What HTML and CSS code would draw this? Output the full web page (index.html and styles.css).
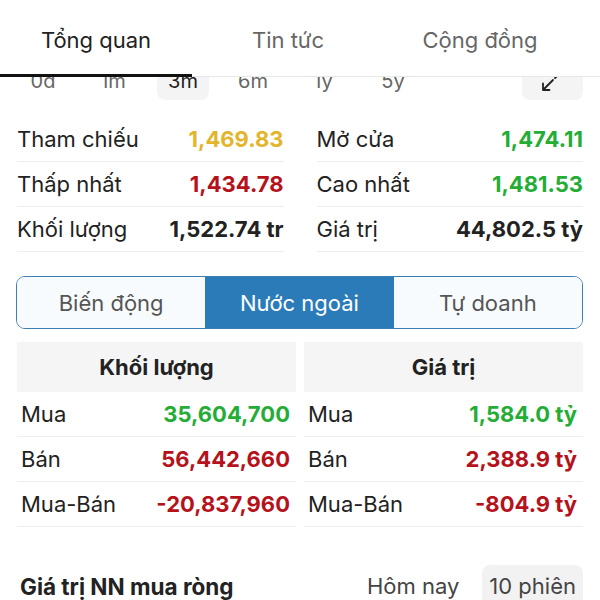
FILE: index.html
```html
<!DOCTYPE html>
<html lang="vi">
<head>
  <meta charset="UTF-8">
  <title>Tổng quan</title>
  <link rel="stylesheet" href="styles.css">
</head>
<body>

  <div class="topbar">
    <div class="tab active">Tổng quan</div>
    <div class="tab">Tin tức</div>
    <div class="tab">Cộng đồng</div>
  </div>

  <div class="page">

    <!-- Khoảng thời gian -->
    <div class="periods">
      <div class="period">0d</div>
      <div class="period">1m</div>
      <div class="period on">3m</div>
      <div class="period">6m</div>
      <div class="period">1y</div>
      <div class="period">5y</div>
      <div class="expand">
        <svg width="28" height="28" viewBox="0 0 28 28" fill="none" stroke="#222" stroke-width="1.8" stroke-linecap="round" stroke-linejoin="round">
          <path d="M13 15 L3 25 M3 18.5 L3 25 L9.5 25"/>
          <path d="M15 13 L25 3 M18.5 3 L25 3 L25 9.5"/>
        </svg>
      </div>
    </div>

    <!-- Thông số phiên -->
    <div class="stats">
      <div class="col">
        <div class="row"><span>Tham chiếu</span><b class="ref">1,469.83</b></div>
        <div class="row"><span>Thấp nhất</span><b class="down">1,434.78</b></div>
        <div class="row"><span>Khối lượng</span><b>1,522.74 tr</b></div>
      </div>
      <div class="col">
        <div class="row"><span>Mở cửa</span><b class="up">1,474.11</b></div>
        <div class="row"><span>Cao nhất</span><b class="up">1,481.53</b></div>
        <div class="row"><span>Giá trị</span><b>44,802.5 tỷ</b></div>
      </div>
    </div>

    <!-- Chọn nhóm -->
    <div class="segment">
      <div class="seg">Biến động</div>
      <div class="seg active">Nước ngoài</div>
      <div class="seg">Tự doanh</div>
    </div>

    <!-- Giao dịch nước ngoài -->
    <div class="tables">
      <div class="tbl">
        <div class="tbl-head">Khối lượng</div>
        <div class="row"><span>Mua</span><b class="up">35,604,700</b></div>
        <div class="row"><span>Bán</span><b class="down">56,442,660</b></div>
        <div class="row"><span>Mua-Bán</span><b class="down">-20,837,960</b></div>
      </div>
      <div class="tbl">
        <div class="tbl-head">Giá trị</div>
        <div class="row"><span>Mua</span><b class="up">1,584.0 tỷ</b></div>
        <div class="row"><span>Bán</span><b class="down">2,388.9 tỷ</b></div>
        <div class="row"><span>Mua-Bán</span><b class="down">-804.9 tỷ</b></div>
      </div>
    </div>

    <div class="section">
      <h3>Giá trị NN mua ròng</h3>
      <div class="range">
        <span class="opt">Hôm nay</span>
        <span class="opt on">10 phiên</span>
      </div>
    </div>

  </div>

</body>
</html>
```

FILE: styles.css
```css
* {
  box-sizing: border-box;
}
body {
  margin: 0;
  font-family: Inter, "Noto Sans", sans-serif;
  background: #ffffff;
  color: #222;
  overflow: hidden;
}
.topbar {
  position: absolute;
  top: 0;
  left: 0;
  right: 0;
  height: 77px;
  background: #ffffff;
  border-bottom: 1px solid #e8e8e8;
  display: flex;
  z-index: 2;
}
.tab {
  position: relative;
  width: 192px;
  text-align: center;
  font-size: 22px;
  line-height: 80px;
  color: #666;
}
.tab.active {
  color: #222;
}
.tab.active::after {
  content: "";
  position: absolute;
  left: 0;
  right: 0;
  bottom: -1px;
  height: 3px;
  background: #111;
}
.page {
  padding: 62px 17px 0 17px;
}
.periods {
  display: flex;
  align-items: center;
  gap: 18px;
  height: 38px;
}
.period {
  width: 52px;
  height: 38px;
  line-height: 38px;
  text-align: center;
  font-size: 20px;
  color: #666;
  border-radius: 8px;
}
.period.on {
  background: #f4f4f4;
  color: #222;
}
.expand {
  margin-left: auto;
  width: 61px;
  height: 38px;
  padding: 3px 0 0 18px;
  background: #f4f4f4;
  border-radius: 8px;
  display: flex;
  align-items: flex-start;
}
.stats {
  margin-top: 17px;
  display: grid;
  grid-template-columns: 1fr 1fr;
  gap: 33px;
}
.row {
  display: flex;
  justify-content: space-between;
  align-items: center;
  height: 45px;
  border-bottom: 1px solid #eeeeee;
  font-size: 22px;
}
.row b {
  font-weight: 700;
}
.ref { color: #e2b52c; }
.up { color: #24ad36; }
.down { color: #b5121b; }
.segment {
  margin-top: 24px;
  margin-left: -1px;
  display: flex;
  height: 53px;
  border: 1.5px solid #3c7fb4;
  border-radius: 9px;
  overflow: hidden;
}
.seg {
  flex: 1;
  display: flex;
  align-items: center;
  justify-content: center;
  font-size: 22px;
  color: #555;
  background: #f8fbfd;
}
.seg.active {
  background: #2b7bb9;
  color: #ffffff;
}
.tables {
  margin-top: 13px;
  display: grid;
  grid-template-columns: 1fr 1fr;
  gap: 8px;
}
.tbl-head {
  height: 50px;
  display: flex;
  align-items: center;
  justify-content: center;
  background: #f5f5f5;
  font-size: 22px;
  font-weight: 700;
}
.tbl .row {
  padding: 0 6px 0 4px;
}
.section {
  margin-top: 38px;
  display: flex;
  justify-content: space-between;
  align-items: center;
}
.section h3 {
  margin: 0 0 0 3px;
  font-size: 22.5px;
  font-weight: 700;
}
.range {
  display: flex;
  align-items: center;
  gap: 16px;
}
.opt {
  font-size: 22px;
  color: #444;
  padding: 8px 7px;
  border-radius: 8px;
}
.opt.on {
  background: #f2f2f2;
}
```
